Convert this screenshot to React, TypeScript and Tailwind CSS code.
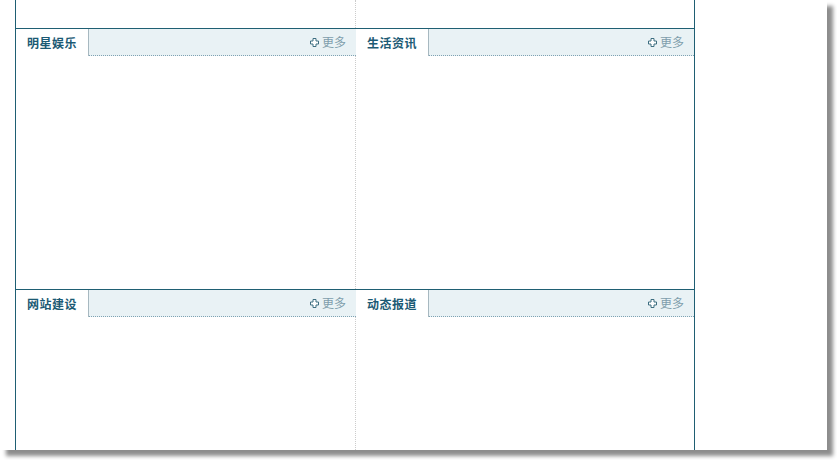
import React from "react";

const font = { fontFamily: '"Noto Sans CJK SC", "Noto Sans", sans-serif' };

function PlusIcon() {
  return (
    <svg width="9" height="9" viewBox="0 0 9 9" className="block">
      <path
        d="M3 0.5 H6 V3 H8.5 V6 H6 V8.5 H3 V6 H0.5 V3 H3 Z"
        fill="#ffffff"
        stroke="#3d6e80"
        strokeWidth="1"
      />
    </svg>
  );
}

function Column({ title, left, bodyClass }: { title: string; left: boolean; bodyClass: string }) {
  return (
    <div className={left ? "w-[340px] flex flex-col" : "flex-1 flex flex-col"}>
      <div className="border-t border-[#1f5f73] h-[28px] flex">
        <div className="w-[73px] h-[27px] bg-white border-r border-[#a7b8c0] flex items-center justify-center">
          <span className="text-[12px] font-bold text-[#1b5a74] leading-none tracking-[0.5px]">{title}</span>
        </div>
        <div className="flex-1 h-[27px] bg-[#e9f2f5] border-b border-dotted border-[#7fa3b3] flex items-center justify-end pr-[10px] gap-[3px]">
          <PlusIcon />
          <span className="text-[12px] text-[#7f9eac] leading-none">更多</span>
        </div>
      </div>
      <div className={(left ? "border-r border-dotted border-[#cccccc] " : "") + bodyClass}></div>
    </div>
  );
}

export default function App() {
  return (
    <div className="w-[837px] h-[460px] bg-white" style={font}>
      <div className="w-[827px] h-[450px] bg-white shadow-[6px_6px_4px_rgba(0,0,0,0.45)] overflow-hidden">
        <div className="ml-[15px] w-[680px] h-[450px] border-x border-[#1f5f73] flex flex-col">
          <div className="h-[28px] flex">
            <div className="w-[340px] border-r border-dotted border-[#cccccc]"></div>
            <div className="flex-1"></div>
          </div>
          <div className="flex">
            <Column title="明星娱乐" left={true} bodyClass="h-[233px]" />
            <Column title="生活资讯" left={false} bodyClass="h-[233px]" />
          </div>
          <div className="flex flex-1">
            <Column title="网站建设" left={true} bodyClass="flex-1" />
            <Column title="动态报道" left={false} bodyClass="flex-1" />
          </div>
        </div>
      </div>
    </div>
  );
}
